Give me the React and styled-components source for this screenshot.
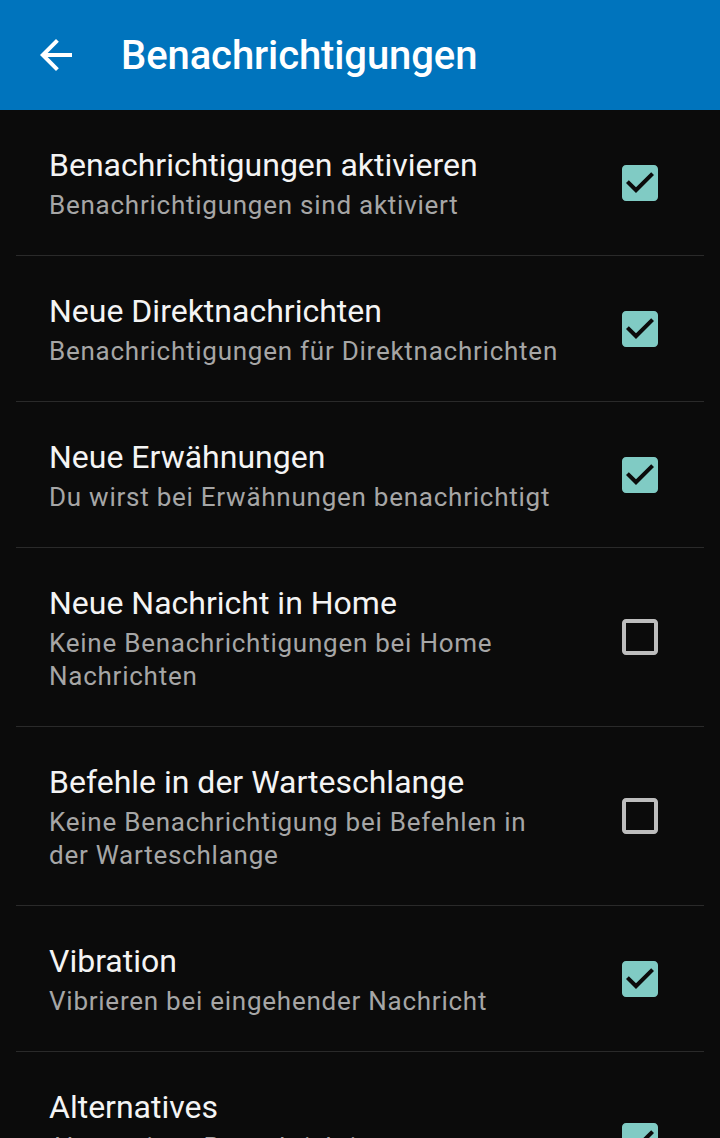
import React from "react";
import styled, { createGlobalStyle } from "styled-components";

const Global = createGlobalStyle`
  html, body { margin: 0; padding: 0; background: #0b0b0b; }
  body { font-family: Roboto, "Noto Sans", sans-serif; overflow: hidden; }
  * { box-sizing: border-box; }
`;

const Screen = styled.div`
  width: 720px;
  height: 1138px;
  overflow: hidden;
  background: #0b0b0b;
  display: flex;
  flex-direction: column;
`;

const AppBar = styled.header`
  height: 110px;
  flex: none;
  background: #0074bd;
  display: flex;
  align-items: center;
  padding-left: 32px;
  gap: 41px;
`;

const BackButton = styled.button`
  width: 48px;
  height: 48px;
  padding: 0;
  border: 0;
  background: transparent;
  color: #fff;
  display: flex;
  align-items: center;
  justify-content: center;
`;

const Title = styled.h1`
  margin: 0;
  color: #fff;
  font-size: 40px;
  font-weight: 500;
  letter-spacing: -0.1px;
`;

const List = styled.div`
  display: flex;
  flex-direction: column;
`;

const Row = styled.div`
  display: flex;
  align-items: center;
  padding: 0 56px 0 49px;
  position: relative;
  border-bottom: 1px solid transparent;
  &:not(:last-child)::after {
    content: "";
    position: absolute;
    left: 16px;
    right: 16px;
    bottom: -1px;
    height: 1px;
    background: #2a2a2a;
  }
`;

const Texts = styled.div`
  flex: 1;
  padding: 35px 46px 33px 0;
`;

const ItemTitle = styled.div`
  color: #f4f4f4;
  font-size: 32px;
  line-height: 40px;
`;

const ItemSub = styled.div`
  color: #a6a6a6;
  font-size: 26px;
  letter-spacing: 0.75px;
  line-height: 33px;
  margin-top: 4px;
`;

const Box = styled.svg`
  width: 48px;
  height: 48px;
  flex: none;
`;

const Check = ({ on }) => (
  <Box viewBox="0 0 24 24">
    {on ? (
      <path
        fill="#80cbc4"
        d="M19 3H5c-1.11 0-2 .9-2 2v14c0 1.1.89 2 2 2h14c1.11 0 2-.9 2-2V5c0-1.1-.89-2-2-2zm-9 14l-5-5 1.41-1.41L10 14.17l7.59-7.59L19 8l-9 9z"
      />
    ) : (
      <path
        fill="#bdbdbd"
        d="M19 5v14H5V5h14m0-2H5c-1.1 0-2 .9-2 2v14c0 1.1.9 2 2 2h14c1.1 0 2-.9 2-2V5c0-1.1-.9-2-2-2z"
      />
    )}
  </Box>
);

const items = [
  { t: "Benachrichtigungen aktivieren", s: "Benachrichtigungen sind aktiviert", on: true },
  { t: "Neue Direktnachrichten", s: "Benachrichtigungen für Direktnachrichten", on: true },
  { t: "Neue Erwähnungen", s: "Du wirst bei Erwähnungen benachrichtigt", on: true },
  { t: "Neue Nachricht in Home", s: "Keine Benachrichtigungen bei Home Nachrichten", on: false },
  { t: "Befehle in der Warteschlange", s: "Keine Benachrichtigung bei Befehlen in der Warteschlange", on: false },
  { t: "Vibration", s: "Vibrieren bei eingehender Nachricht", on: true },
  { t: "Alternatives", s: "Alternativen Benachrichtigungston verwenden", on: true },
];

export default function App() {
  return (
    <Screen>
      <Global />
      <AppBar>
        <BackButton aria-label="Zurück">
          <svg width="48" height="48" viewBox="0 0 24 24">
            <path fill="#fff" d="M20 11H7.83l5.59-5.59L12 4l-8 8 8 8 1.41-1.41L7.83 13H20v-2z" />
          </svg>
        </BackButton>
        <Title>Benachrichtigungen</Title>
      </AppBar>
      <List>
        {items.map((it) => (
          <Row key={it.t}>
            <Texts>
              <ItemTitle>{it.t}</ItemTitle>
              <ItemSub>{it.s}</ItemSub>
            </Texts>
            <Check on={it.on} />
          </Row>
        ))}
      </List>
    </Screen>
  );
}
